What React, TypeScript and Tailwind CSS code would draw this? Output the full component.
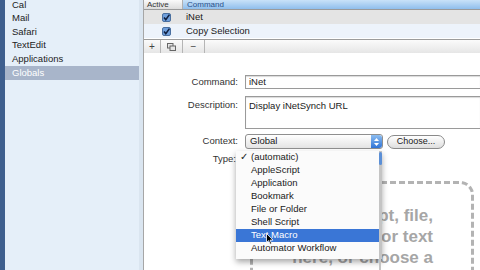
const sidebarItems = ["Cal", "Mail", "Safari", "TextEdit", "Applications", "Globals"];

const menuItems = [
  "(automatic)",
  "AppleScript",
  "Application",
  "Bookmark",
  "File or Folder",
  "Shell Script",
  "Text Macro",
  "Automator Workflow",
];

function CheckBox() {
  return (
    <svg width="9" height="9" viewBox="0 0 9 9">
      <rect x="0.5" y="0.5" width="8" height="8" rx="1.5" fill="#6f9fdc" stroke="#4a6f9f" />
      <path d="M2 4.5 L3.8 6.6 L7.4 1.6" fill="none" stroke="#102040" strokeWidth="1.6" />
    </svg>
  );
}

function Stepper() {
  return (
    <div className="w-[11px] h-full bg-gradient-to-b from-[#8cbdf0] to-[#2f74d6] rounded-r-[3px] flex flex-col items-center justify-center gap-[2px]">
      <svg width="5" height="3" viewBox="0 0 5 3">
        <path d="M0 3 L2.5 0 L5 3 Z" fill="#ffffff" />
      </svg>
      <svg width="5" height="3" viewBox="0 0 5 3">
        <path d="M0 0 L2.5 3 L5 0 Z" fill="#ffffff" />
      </svg>
    </div>
  );
}

export default function App() {
  return (
    <div className="relative w-[480px] h-[270px] overflow-hidden flex bg-white font-['Liberation_Sans',Arial,sans-serif] text-[#1a1a1a]">
      {/* left window edge */}
      <div className="w-[5px] bg-[#3e5f8e]" />

      {/* sidebar */}
      <div className="w-[139px] bg-[#e5eff9] border-r border-[#a6a6a6] flex">
        <div className="flex-1 -mt-[2px]">
          {sidebarItems.map((item) => (
            <div
              key={item}
              className={
                item === "Globals"
                  ? "h-[13.6px] pl-[7px] flex items-center text-[9.5px] bg-[#a8b5ca] text-white"
                  : "h-[13.6px] pl-[7px] flex items-center text-[9.5px] text-[#222]"
              }
            >
              {item}
            </div>
          ))}
        </div>
        <div className="w-[4px] bg-[#dae5f0]" />
      </div>

      {/* main */}
      <div className="flex-1 flex flex-col">
        {/* table header */}
        <div className="h-[10px] flex border-b border-[#9a9a9a] text-[8px]">
          <div className="w-[39px] shrink-0 pl-[3px] flex items-center bg-gradient-to-b from-[#fafafa] to-[#dcdcdc] border-r border-[#b0b0b0] text-[#333]">
            Active
          </div>
          <div className="flex-1 pl-[4px] flex items-center bg-gradient-to-b from-[#c9e2f8] to-[#8fbeec] text-[#28508a]">
            Command
          </div>
        </div>

        {/* rows */}
        <div className="h-[14px] flex items-center bg-[#e4e4e4] text-[9.5px]">
          <div className="w-[39px] shrink-0 flex justify-center pl-[6px]">
            <CheckBox />
          </div>
          <div className="pl-[3px]">iNet</div>
        </div>
        <div className="h-[14px] flex items-center bg-[#edf3fb] text-[9.5px]">
          <div className="w-[39px] shrink-0 flex justify-center pl-[6px]">
            <CheckBox />
          </div>
          <div className="pl-[3px]">Copy Selection</div>
        </div>

        {/* button bar */}
        <div className="mt-[1px] h-[14px] flex border-t border-[#9c9c9c] bg-gradient-to-b from-[#fbfbfb] to-[#e6e6e6] text-[10px] text-[#444]">
          <div className="w-[17px] flex items-center justify-center border-r border-[#b5b5b5]">+</div>
          <div className="w-[22px] flex items-center justify-center border-r border-[#b5b5b5]">
            <svg width="9" height="8" viewBox="0 0 9 8">
              <rect x="0.5" y="0.5" width="5.5" height="4.5" fill="#e6e6e6" stroke="#666" />
              <rect x="3" y="3" width="5.5" height="4.5" fill="#e6e6e6" stroke="#666" />
            </svg>
          </div>
          <div className="w-[22px] flex items-center justify-center border-r border-[#b5b5b5]">−</div>
        </div>
        <div className="h-[5px] bg-gradient-to-b from-[#a9a9a9] to-[#d8d8d8]" />

        {/* form */}
        <div className="flex-1 pt-[22px] text-[9.5px]">
          <div className="flex items-center h-[14px]">
            <div className="w-[96px] pr-[2px] text-right text-[#333]">Command:</div>
            <div className="ml-[5px] flex-1 h-full border border-[#9a9a9a] border-r-0 flex items-center pl-[3px] shadow-[inset_0_1px_1px_rgba(0,0,0,0.15)]">
              iNet
            </div>
          </div>

          <div className="flex mt-[7px] h-[33px]">
            <div className="w-[96px] pr-[2px] pt-[2px] text-right text-[#333]">Description:</div>
            <div className="ml-[5px] flex-1 h-full border border-[#9a9a9a] border-r-0 pl-[3px] pt-[2px] shadow-[inset_0_1px_1px_rgba(0,0,0,0.15)]">
              Display iNetSynch URL
            </div>
          </div>

          <div className="flex items-center mt-[5px] h-[15px]">
            <div className="w-[96px] pr-[2px] text-right text-[#333]">Context:</div>
            <div className="ml-[5px] w-[138px] h-full flex border border-[#8f8f8f] rounded-[3px] bg-gradient-to-b from-[#ffffff] to-[#e4e4e4]">
              <div className="flex-1 pl-[4px] flex items-center">Global</div>
              <Stepper />
            </div>
            <div className="ml-[4px] w-[58px] h-[14px] rounded-full border border-[#8a8a8a] bg-gradient-to-b from-[#ffffff] to-[#dedede] flex items-center justify-center text-[9px]">
              Choose...
            </div>
          </div>

          <div className="flex items-center mt-[3px] h-[14px]">
            <div className="w-[92px] text-right text-[#333]">Type:</div>
          </div>

          {/* drop zone */}
          <div className="ml-[106px] mr-[6px] mt-[15px] h-[120px] border-[3px] border-dashed border-[#b3b3b3] rounded-[14px] pt-[21px] pr-[38px] text-right font-bold text-[17px] leading-[21px] text-[#a6a6a6]">
            <div>Drop a script, file,</div>
            <div>bookmark, or text</div>
            <div>here, or choose a</div>
          </div>
        </div>
      </div>

      {/* open popup menu */}
      <div className="absolute left-[236px] top-[151px] w-[146px] h-[108px] bg-[#fbfbfb] border-r-[3px] border-[#c4c4c4] shadow-[0_3px_6px_rgba(0,0,0,0.35)] text-[9.5px]">
        <div className="absolute right-[-3px] top-[1px] w-[3px] h-[13px] rounded-[2px] bg-[#5b8fd6]" />
        {menuItems.map((item) => (
          <div
            key={item}
            className={
              item === "Text Macro"
                ? "relative h-[13px] pl-[15px] flex items-center bg-[#3a76d6] text-white"
                : "relative h-[13px] pl-[15px] flex items-center text-[#1a1a1a]"
            }
          >
            {item === "(automatic)" && <span className="absolute left-[4px]">✓</span>}
            {item}
          </div>
        ))}
        {/* mouse cursor */}
        <svg className="absolute left-[30px] top-[82px]" width="8" height="12" viewBox="0 0 8 12">
          <path d="M0.5 0.5 L0.5 9.5 L2.6 7.6 L4.2 11.2 L5.6 10.6 L4.1 7.1 L7 7.1 Z" fill="#000" stroke="#fff" strokeWidth="0.8" />
        </svg>
      </div>
      {/* popup edge continuing below the menu */}
      <div className="absolute left-[379px] top-[259px] w-[2px] h-[11px] bg-[#c4c4c4]" />
    </div>
  );
}
